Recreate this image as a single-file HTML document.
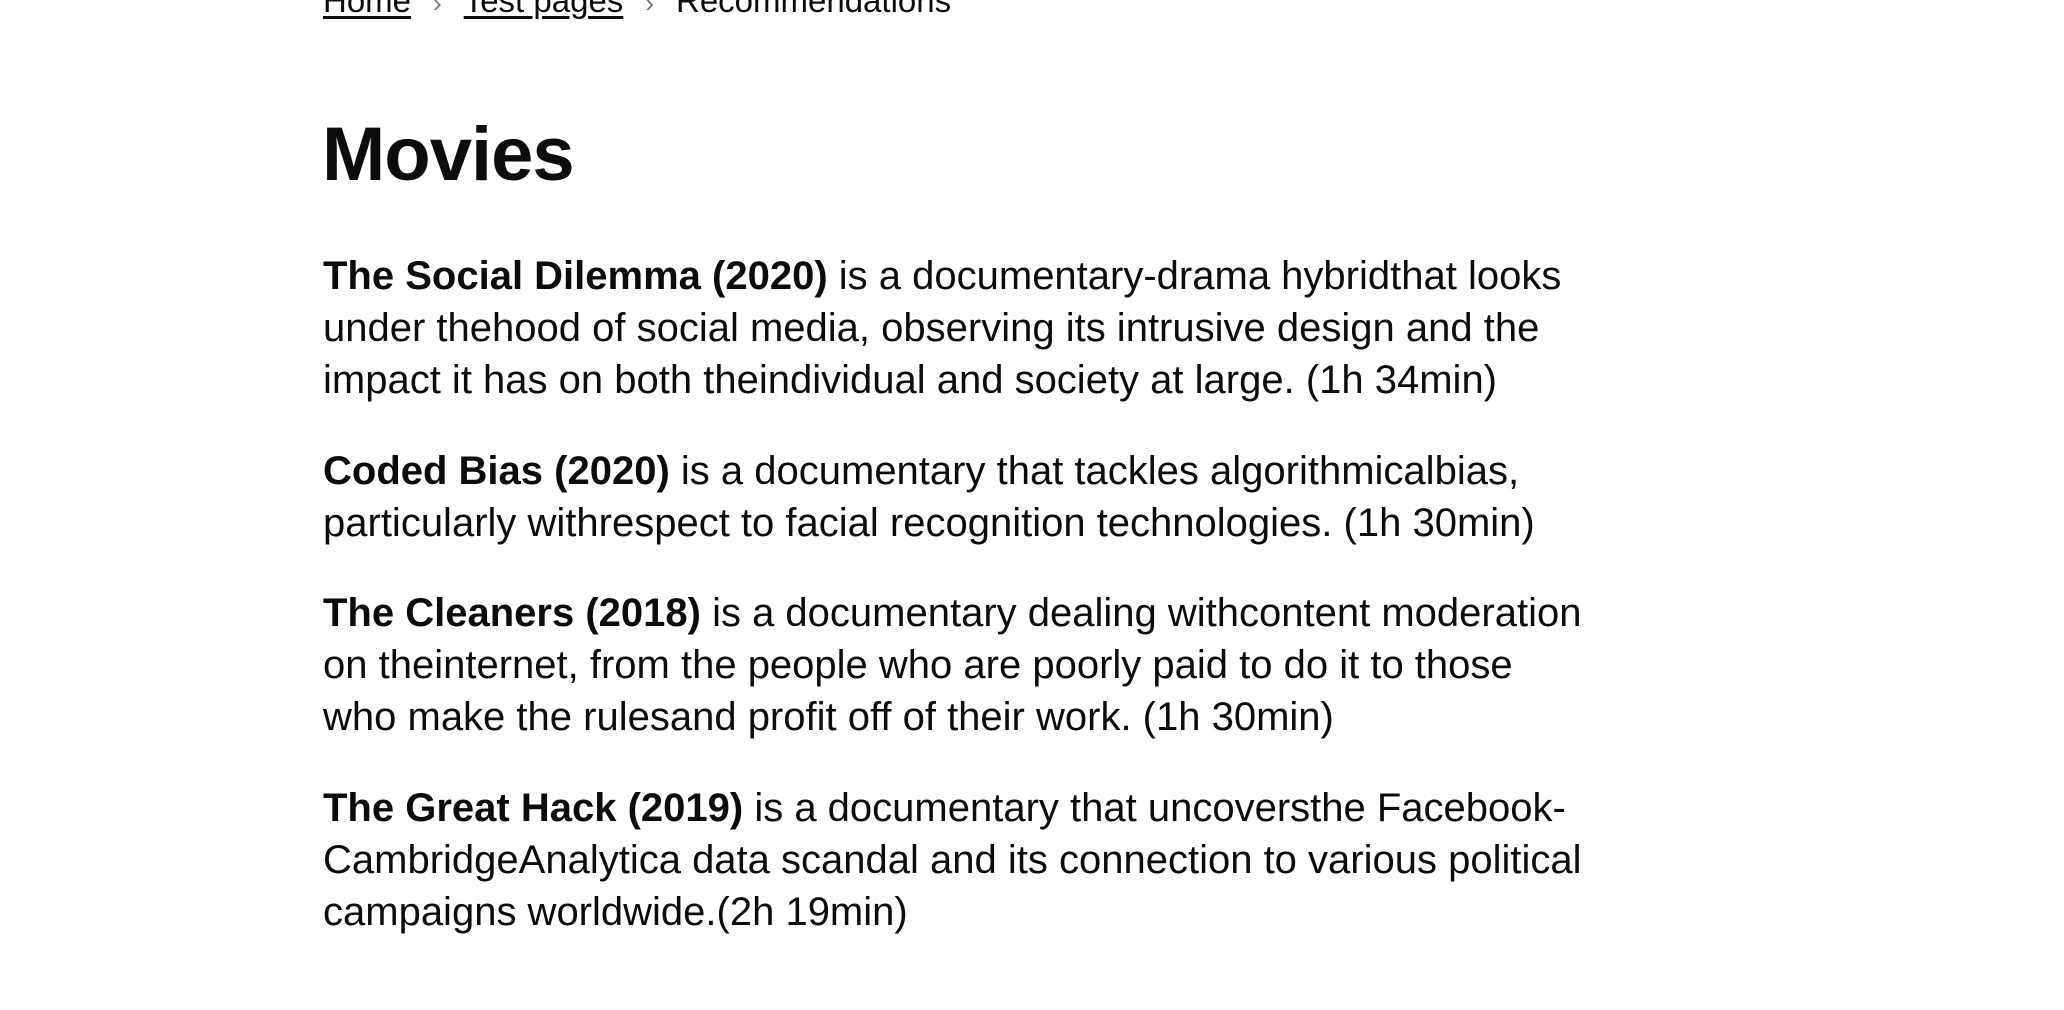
<!DOCTYPE html>
<html><head><meta charset="utf-8"><style>
html,body{margin:0;padding:0;background:#fff;width:2064px;height:1010px;overflow:hidden}
body{font-family:"Liberation Sans",sans-serif;color:#0b0c0c;position:relative}
.bc{position:absolute;left:323px;top:-19px;font-size:33px;line-height:40px;white-space:nowrap}
.bc a{color:#0b0c0c;text-decoration:underline;text-underline-offset:4px}
.bc .sep{color:#6f777b;margin:0 22px;font-size:26px}
h1{position:absolute;left:322px;top:115px;margin:0;font-size:76px;line-height:80px;font-weight:bold;letter-spacing:-1px}
.p{position:absolute;left:323px;margin:0;font-size:40px;line-height:52px;white-space:nowrap;letter-spacing:0px}
</style></head><body>
<div class="bc"><a>Home</a><span class="sep">›</span><a>Test pages</a><span class="sep">›</span>Recommendations</div>
<h1>Movies</h1>
<p class="p" style="top:250px"><b>The Social Dilemma (2020)</b> is a documentary-drama hybridthat looks<br>under thehood of social media, observing its intrusive design and the<br>impact it has on both theindividual and society at large. (1h 34min)</p>
<p class="p" style="top:445px"><b>Coded Bias (2020)</b> is a documentary that tackles algorithmicalbias,<br>particularly withrespect to facial recognition technologies. (1h 30min)</p>
<p class="p" style="top:587px"><b>The Cleaners (2018)</b> is a documentary dealing withcontent moderation<br>on theinternet, from the people who are poorly paid to do it to those<br>who make the rulesand profit off of their work. (1h 30min)</p>
<p class="p" style="top:782px"><b>The Great Hack (2019)</b> is a documentary that uncoversthe Facebook-<br>CambridgeAnalytica data scandal and its connection to various political<br>campaigns worldwide.(2h 19min)</p>
</body></html>
